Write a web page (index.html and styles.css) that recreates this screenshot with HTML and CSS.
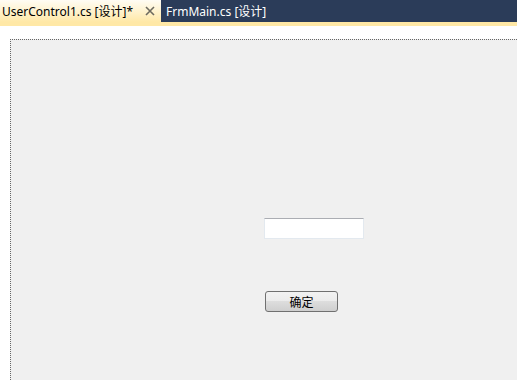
FILE: index.html
```html
<!DOCTYPE html>
<html lang="zh-CN">
<head>
    <meta charset="UTF-8">
    <title>UserControl1.cs [设计]</title>
    <link rel="stylesheet" href="styles.css">
</head>
<body>
    <div class="tabs">
        <div class="tab active">
            <span class="tab-title">UserControl1.cs [设计]*</span>
            <span class="tab-close">
                <svg width="10" height="10" viewBox="0 0 10 10"><path d="M1 1 L9 9 M9 1 L1 9" stroke="#6d6a5f" stroke-width="1.6"/></svg>
            </span>
        </div>
        <div class="tab">
            <span class="tab-title">FrmMain.cs [设计]</span>
        </div>
    </div>
    <div class="tab-strip"></div>

    <!-- area del designer -->
    <div class="designer">
        <div class="surface">
            <div class="textbox"></div>
            <div class="button">确定</div>
        </div>
    </div>
</body>
</html>
```

FILE: styles.css
```css
body {
    margin: 0;
    height: 100vh;
    background-color: #ffffff;
    font-family: "Noto Sans", "Noto Sans CJK SC", sans-serif;
    overflow: hidden;
}
.tabs {
    display: flex;
    height: 22px;
    background-color: #2b3c59;
}
.tab {
    display: flex;
    align-items: center;
    height: 22px;
    padding: 0 5px 0 5px;
    color: #ffffff;
    font-size: 12px;
}
.tab.active {
    width: 161px;
    box-sizing: border-box;
    padding: 0 6px 0 2px;
    color: #000000;
    background: linear-gradient(#fffcf4, #fff3cf 50%, #ffe8a6);
    justify-content: space-between;
}
.tab-close {
    display: flex;
    align-items: center;
}
.tab-strip {
    height: 4px;
    background-color: #ffe8a6;
}
.designer {
    padding: 13px 0 0 10px;
}
.surface {
    position: relative;
    height: 340px;
    border-top: 1px dotted #666666;
    border-left: 1px dotted #666666;
    background-color: #f0f0f0;
}
.textbox {
    position: absolute;
    left: 253px;
    top: 178px;
    width: 98px;
    height: 19px;
    background-color: #ffffff;
    border: 1px solid #e3e9ef;
    border-top-color: #abadb3;
}
.button {
    position: absolute;
    left: 254px;
    top: 251px;
    width: 71px;
    height: 19px;
    border: 1px solid #707070;
    border-radius: 3px;
    background: linear-gradient(#f2f2f2, #ebebeb 50%, #dddddd 50%, #cfcfcf);
    font-family: "Noto Sans CJK SC", sans-serif;
    font-size: 12px;
    line-height: 19px;
    text-align: center;
    color: #000000;
}
```
